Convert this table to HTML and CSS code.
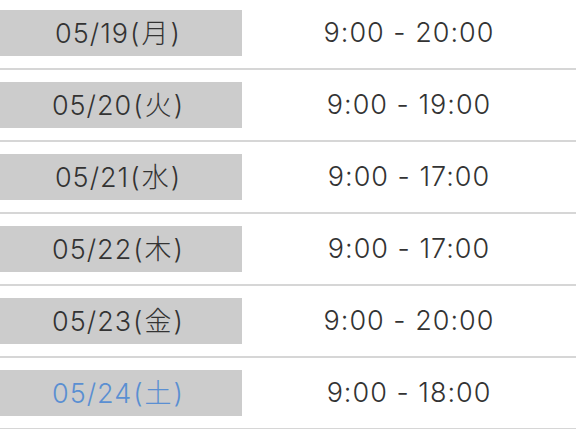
FILE: index.html
```html
<!DOCTYPE html>
<html lang="ja">
<head>
<meta charset="utf-8">
<link rel="stylesheet" href="styles.css">
</head>
<body>
<ul class="schedule">
  <li class="row"><span class="date">05/19<span class="wd">(月)</span></span><span class="hours">9:00 - 20:00</span></li>
  <li class="row"><span class="date">05/20<span class="wd">(火)</span></span><span class="hours">9:00 - 19:00</span></li>
  <li class="row"><span class="date">05/21<span class="wd">(水)</span></span><span class="hours">9:00 - 17:00</span></li>
  <li class="row"><span class="date">05/22<span class="wd">(木)</span></span><span class="hours">9:00 - 17:00</span></li>
  <li class="row"><span class="date">05/23<span class="wd">(金)</span></span><span class="hours">9:00 - 20:00</span></li>
  <li class="row"><span class="date date-sat">05/24<span class="wd">(土)</span></span><span class="hours">9:00 - 18:00</span></li>
</ul>
</body>
</html>
```
FILE: styles.css
```css
html, body {
  margin: 0;
  padding: 0;
  background: #ffffff;
}
.schedule {
  list-style: none;
  margin: 0;
  padding: 0;
  font-family: "Inter", "Noto Sans CJK JP", sans-serif;
  font-weight: 300;
  color: #333333;
}
.row {
  display: grid;
  grid-template-columns: 242px 1fr;
  align-items: center;
  padding: 12px 0;
  border-bottom: 2px solid #d6d6d6;
}
.row:first-child {
  padding-top: 10px;
}
.date {
  display: flex;
  align-items: center;
  justify-content: center;
  height: 46px;
  padding-right: 5px;
  background: #cccccc;
  font-size: 27px;
  letter-spacing: 1px;
  line-height: 1;
}
.wd {
  margin-left: 1px;
  letter-spacing: 2px;
}
.date-sat {
  color: #5a8fd2;
}
.hours {
  text-align: center;
  font-size: 27px;
  letter-spacing: 1px;
  line-height: 1;
  padding-bottom: 2px;
}
```
